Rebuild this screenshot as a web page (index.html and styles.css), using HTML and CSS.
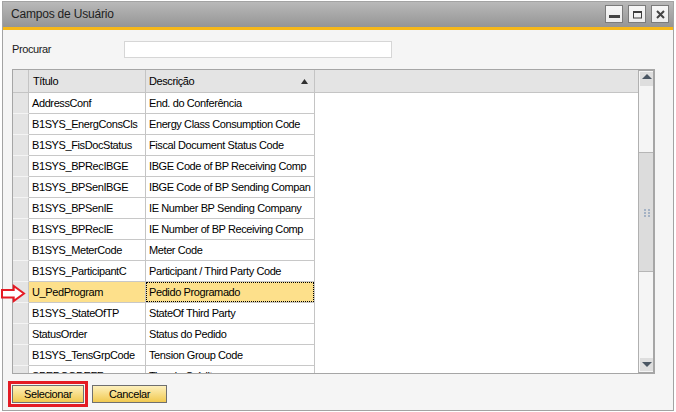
FILE: index.html
```html
<!DOCTYPE html>
<html lang="pt">
<head>
<meta charset="utf-8">
<title>Campos de Usuário</title>
<link rel="stylesheet" href="styles.css">
</head>
<body>
<div class="window">
  <div class="titlebar">
    <span class="title">Campos de Usuário</span>
    <div class="wbtns">
      <div class="wbtn"><svg width="16" height="16" viewBox="0 0 16 16"><rect x="3" y="9" width="11" height="3" fill="#444"/></svg></div>
      <div class="wbtn"><svg width="16" height="16" viewBox="0 0 16 16"><rect x="4.5" y="5.5" width="8" height="6.5" fill="none" stroke="#3c3c3c" stroke-width="1"/><rect x="4" y="5" width="9" height="2" fill="#3c3c3c"/></svg></div>
      <div class="wbtn"><svg width="16" height="16" viewBox="0 0 16 16"><path d="M5 5 L12 12 M12 5 L5 12" stroke="#444" stroke-width="2" fill="none"/></svg></div>
    </div>
  </div>
  <div class="content">
    <div class="search">
      <label class="search-label">Procurar</label>
      <div class="search-input"></div>
    </div>
    <div class="grid">
      <div class="table">
        <div class="thead">
          <div class="hc corner"></div>
          <div class="hc">Título</div>
          <div class="hc sorted"><span>Descrição</span><svg width="7" height="5" viewBox="0 0 7 5"><polygon points="0,5 3.5,0 7,5" fill="#303030"/></svg></div>
          <div class="hc filler"></div>
        </div>
        <div class="tbody">
          <div class="row"><div class="rh"></div><div class="c">AddressConf</div><div class="c">End. do Conferência</div></div>
          <div class="row"><div class="rh"></div><div class="c">B1SYS_EnergConsCls</div><div class="c">Energy Class Consumption Code</div></div>
          <div class="row"><div class="rh"></div><div class="c">B1SYS_FisDocStatus</div><div class="c">Fiscal Document Status Code</div></div>
          <div class="row"><div class="rh"></div><div class="c">B1SYS_BPRecIBGE</div><div class="c">IBGE Code of BP Receiving Comp</div></div>
          <div class="row"><div class="rh"></div><div class="c">B1SYS_BPSenIBGE</div><div class="c">IBGE Code of BP Sending Compan</div></div>
          <div class="row"><div class="rh"></div><div class="c">B1SYS_BPSenIE</div><div class="c">IE Number BP Sending Company</div></div>
          <div class="row"><div class="rh"></div><div class="c">B1SYS_BPRecIE</div><div class="c">IE Number of BP Receiving Comp</div></div>
          <div class="row"><div class="rh"></div><div class="c">B1SYS_MeterCode</div><div class="c">Meter Code</div></div>
          <div class="row"><div class="rh"></div><div class="c">B1SYS_ParticipantC</div><div class="c">Participant / Third Party Code</div></div>
          <div class="row sel"><div class="rh"></div><div class="c">U_PedProgram</div><div class="c focus">Pedido Programado</div></div>
          <div class="row"><div class="rh"></div><div class="c">B1SYS_StateOfTP</div><div class="c">StateOf Third Party</div></div>
          <div class="row"><div class="rh"></div><div class="c">StatusOrder</div><div class="c">Status do Pedido</div></div>
          <div class="row"><div class="rh"></div><div class="c">B1SYS_TensGrpCode</div><div class="c">Tension Group Code</div></div>
          <div class="row"><div class="rh"></div><div class="c">SPEDCODEFF</div><div class="c">Tipo de Crédito</div></div>
        </div>
      </div>
      <div class="vscroll">
        <div class="sbtn up"><svg width="10" height="5" viewBox="0 0 10 5"><polygon points="0,5 5,0 10,5" fill="#4a5663"/></svg></div>
        <div class="thumb"><svg width="9" height="9" viewBox="0 0 9 9"><g fill="#a4b2c4"><rect x="1" y="1" width="2" height="2"/><rect x="5" y="1" width="2" height="2"/><rect x="1" y="4" width="2" height="2"/><rect x="5" y="4" width="2" height="2"/><rect x="1" y="7" width="2" height="2"/><rect x="5" y="7" width="2" height="2"/></g></svg></div>
        <div class="track"></div>
        <div class="sbtn down"><svg width="10" height="5" viewBox="0 0 10 5"><polygon points="0,0 10,0 5,5" fill="#4a5663"/></svg></div>
      </div>
    </div>
    <div class="actions">
      <button class="btn btn-select">Selecionar</button>
      <button class="btn btn-cancel">Cancelar</button>
    </div>
  </div>
</div>
<svg class="marker" width="27" height="20" viewBox="0 0 27 20"><polygon points="2,7 13.7,7 13.7,3 24,10.5 13.7,18 13.7,14.5 2,14.5" fill="#fff" stroke="#e51a24" stroke-width="2"/></svg>
</body>
</html>
```

FILE: styles.css
```css
* { box-sizing: border-box; }

body {
  margin: 0;
  background: #fff;
  font-family: "Liberation Sans", Arial, sans-serif;
  font-size: 11px;
  letter-spacing: -0.4px;
  color: #000;
}

.window {
  margin: 1px 0 0 2px;
  width: 672px;
  height: 410px;
  border: 1px solid #a3a3a3;
  background: #f5f5f5;
  display: flex;
  flex-direction: column;
}

.titlebar {
  flex: none;
  height: 28px;
  display: flex;
  justify-content: space-between;
  align-items: flex-start;
  padding: 3px 4px 0 8px;
  background: linear-gradient(#b9b9b9, #959595);
  border-bottom: 3px solid #f6b819;
}

.title {
  font-size: 12px;
  letter-spacing: -0.2px;
  line-height: 19px;
  color: #1e1e1e;
}

.wbtns {
  display: flex;
  gap: 5px;
}

.wbtn {
  width: 18px;
  height: 18px;
  border: 1px solid #7b7b7b;
  background: linear-gradient(#f7f7f7, #ececec);
}

.wbtn svg { display: block; }

.content {
  flex: 1;
  display: flex;
  flex-direction: column;
  padding: 11px 0 0 9px;
}

.search {
  display: flex;
  align-items: center;
  height: 17px;
}

.search-label {
  width: 112px;
  line-height: 15px;
  color: #1a1a1a;
}

.search-input {
  width: 268px;
  height: 17px;
  border: 1px solid #d6d6d6;
  background: #fff;
}

.grid {
  margin-top: 11px;
  width: 643px;
  height: 305px;
  display: flex;
  border: 1px solid #a6a6a6;
  border-right-width: 2px;
}

.table {
  flex: 1;
  display: flex;
  flex-direction: column;
  background: #fff;
  overflow: hidden;
}

.thead {
  flex: none;
  height: 23px;
  display: grid;
  grid-template-columns: 16px 117px 169px 1fr;
  background: #e4e4e4;
  border-bottom: 1px solid #c4c4c4;
}

.hc {
  border-right: 1px solid #c4c4c4;
  padding: 1px 0 0 4px;
  line-height: 21px;
  white-space: nowrap;
}

.hc.corner { padding: 0; }
.hc.filler { border-right: 0; }

.hc.sorted {
  padding-left: 3px;
  padding-right: 6px;
  display: flex;
  justify-content: space-between;
  align-items: center;
}

.hc.sorted svg { margin-top: -1px; }

.tbody {
  flex: 1;
  overflow: hidden;
}

.row {
  display: grid;
  grid-template-columns: 16px 117px 169px;
  width: 302px;
  height: 21px;
}

.rh {
  background: #e4e4e4;
  border-right: 1px solid #c4c4c4;
  border-bottom: 1px solid #f4f4f4;
}

.c {
  border-right: 1px solid #c4c4c4;
  border-bottom: 1px solid #c8c8c8;
  padding-left: 3px;
  line-height: 20px;
  white-space: nowrap;
  overflow: hidden;
}

.row.sel .c { background: #fde08b; }

.c.focus { position: relative; }

.c.focus::after {
  content: "";
  position: absolute;
  left: 0;
  top: 0;
  right: 0;
  bottom: 0;
  border: 1px dotted #000;
}

.vscroll {
  flex: none;
  width: 15px;
  display: flex;
  flex-direction: column;
  background: #f5f5f5;
  border-left: 1px solid #b0b0b0;
  border-top: 1px solid #a6a6a6;
  border-bottom: 1px solid #a6a6a6;
  padding: 1px 0;
}

.sbtn {
  flex: none;
  margin-left: 1px;
  width: 13px;
  background: #dedede;
  display: flex;
  justify-content: center;
  align-items: flex-start;
}

.sbtn.up { height: 14px; padding-top: 2px; }
.sbtn.down { height: 13px; padding-top: 4px; }
.sbtn svg { display: block; }

.thumb {
  flex: none;
  margin-top: 66px;
  height: 120px;
  background: #dcdcdc;
  border-top: 1px solid #b6b6b6;
  border-bottom: 1px solid #b6b6b6;
  display: flex;
  justify-content: center;
  align-items: center;
}

.thumb svg { display: block; margin-left: 2px; }

.track { flex: 1; }

.actions {
  margin-top: 11px;
  display: flex;
  gap: 8px;
}

.btn {
  height: 18px;
  padding: 0;
  border: 1px solid #6f6f6f;
  background: linear-gradient(#fdf0bd, #f1c94f);
  font-family: inherit;
  font-size: 11px;
  letter-spacing: -0.4px;
  line-height: 16px;
  color: #000;
}

.btn-select {
  width: 72px;
  outline: 3px solid #e41b23;
  outline-offset: 1px;
}

.btn-cancel { width: 75px; }

.marker {
  position: absolute;
  left: 0;
  top: 283px;
}
```
